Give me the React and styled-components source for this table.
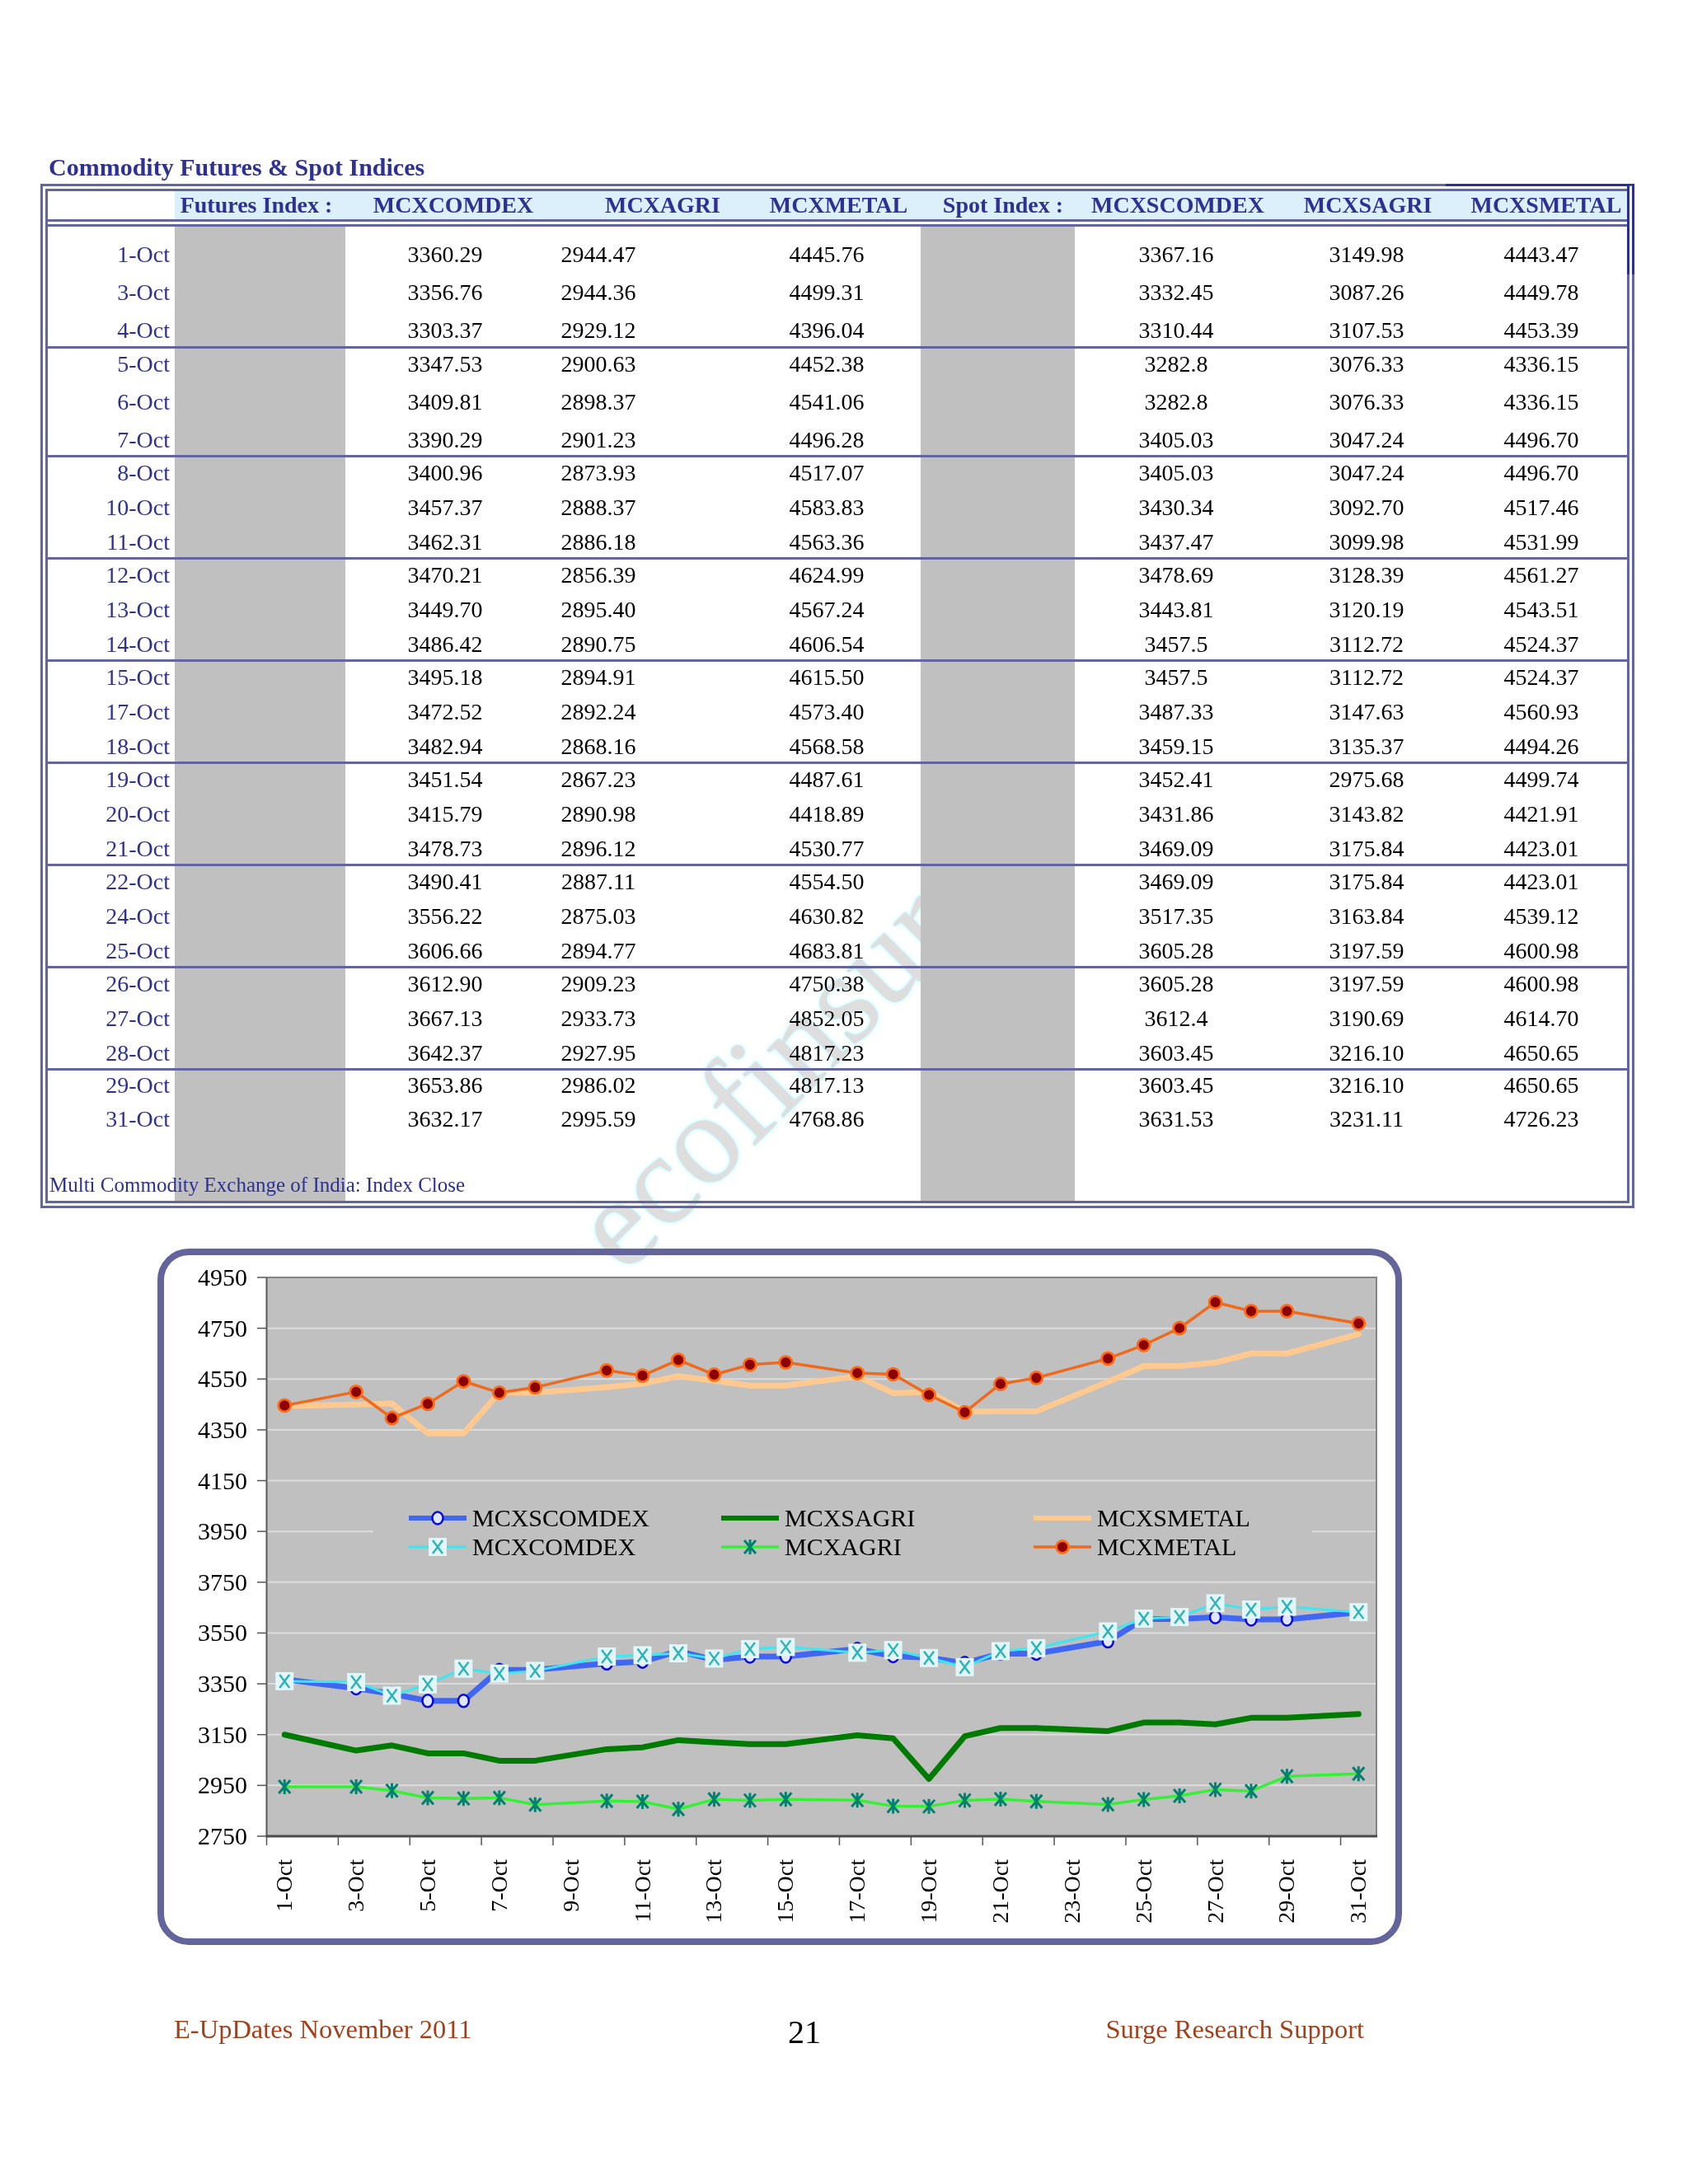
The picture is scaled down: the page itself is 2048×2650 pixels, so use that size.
import React from "react";
import styled, { createGlobalStyle } from "styled-components";

const NAVY = "#2f3192";
const RULE = "#63659f";
const GREY = "#c0c0c0";

const GlobalStyle = createGlobalStyle`
  html, body {
    margin: 0;
    padding: 0;
    background: #ffffff;
  }
  body {
    font-family: "Liberation Serif", "Times New Roman", serif;
  }
`;

const ROWS = [
  ["1-Oct", "3360.29", "2944.47", "4445.76", "3367.16", "3149.98", "4443.47"],
  ["3-Oct", "3356.76", "2944.36", "4499.31", "3332.45", "3087.26", "4449.78"],
  ["4-Oct", "3303.37", "2929.12", "4396.04", "3310.44", "3107.53", "4453.39"],
  ["5-Oct", "3347.53", "2900.63", "4452.38", "3282.8", "3076.33", "4336.15"],
  ["6-Oct", "3409.81", "2898.37", "4541.06", "3282.8", "3076.33", "4336.15"],
  ["7-Oct", "3390.29", "2901.23", "4496.28", "3405.03", "3047.24", "4496.70"],
  ["8-Oct", "3400.96", "2873.93", "4517.07", "3405.03", "3047.24", "4496.70"],
  ["10-Oct", "3457.37", "2888.37", "4583.83", "3430.34", "3092.70", "4517.46"],
  ["11-Oct", "3462.31", "2886.18", "4563.36", "3437.47", "3099.98", "4531.99"],
  ["12-Oct", "3470.21", "2856.39", "4624.99", "3478.69", "3128.39", "4561.27"],
  ["13-Oct", "3449.70", "2895.40", "4567.24", "3443.81", "3120.19", "4543.51"],
  ["14-Oct", "3486.42", "2890.75", "4606.54", "3457.5", "3112.72", "4524.37"],
  ["15-Oct", "3495.18", "2894.91", "4615.50", "3457.5", "3112.72", "4524.37"],
  ["17-Oct", "3472.52", "2892.24", "4573.40", "3487.33", "3147.63", "4560.93"],
  ["18-Oct", "3482.94", "2868.16", "4568.58", "3459.15", "3135.37", "4494.26"],
  ["19-Oct", "3451.54", "2867.23", "4487.61", "3452.41", "2975.68", "4499.74"],
  ["20-Oct", "3415.79", "2890.98", "4418.89", "3431.86", "3143.82", "4421.91"],
  ["21-Oct", "3478.73", "2896.12", "4530.77", "3469.09", "3175.84", "4423.01"],
  ["22-Oct", "3490.41", "2887.11", "4554.50", "3469.09", "3175.84", "4423.01"],
  ["24-Oct", "3556.22", "2875.03", "4630.82", "3517.35", "3163.84", "4539.12"],
  ["25-Oct", "3606.66", "2894.77", "4683.81", "3605.28", "3197.59", "4600.98"],
  ["26-Oct", "3612.90", "2909.23", "4750.38", "3605.28", "3197.59", "4600.98"],
  ["27-Oct", "3667.13", "2933.73", "4852.05", "3612.4", "3190.69", "4614.70"],
  ["28-Oct", "3642.37", "2927.95", "4817.23", "3603.45", "3216.10", "4650.65"],
  ["29-Oct", "3653.86", "2986.02", "4817.13", "3603.45", "3216.10", "4650.65"],
  ["31-Oct", "3632.17", "2995.59", "4768.86", "3631.53", "3231.11", "4726.23"],
];

// row groups between the rules of the table
const GROUPS = [
  { from: 0, to: 3, pt: 25, pb: 10, gap: 28 },
  { from: 3, to: 6, pt: 10, pb: 9, gap: 28 },
  { from: 6, to: 9, pt: 10, pb: 9, gap: 24 },
  { from: 9, to: 12, pt: 10, pb: 9, gap: 24 },
  { from: 12, to: 15, pt: 10, pb: 9, gap: 24 },
  { from: 15, to: 18, pt: 10, pb: 9, gap: 24 },
  { from: 18, to: 21, pt: 10, pb: 9, gap: 24 },
  { from: 21, to: 24, pt: 10, pb: 9, gap: 24 },
  { from: 24, to: 26, pt: 9, pb: 0, gap: 23, last: true },
];

const HEADS = [
  { label: "", blank: true },
  { label: "Futures Index :" },
  { label: "MCXCOMDEX" },
  { label: "MCXAGRI" },
  { label: "MCXMETAL" },
  { label: "Spot Index :" },
  { label: "MCXSCOMDEX" },
  { label: "MCXSAGRI" },
  { label: "MCXSMETAL" },
];

const Page = styled.div`
  position: relative;
  width: 2048px;
  height: 2650px;
  padding-top: 186px;
  box-sizing: border-box;
  overflow: hidden;
  background: #ffffff;
`;

const Title = styled.h1`
  margin: 0 0 0 59px;
  font: bold 30px/34px "Liberation Serif", "Times New Roman", serif;
  color: ${NAVY};
`;

const Frame = styled.div`
  position: relative;
  margin: 3px 0 0 49px;
  width: 1934px;
  box-sizing: border-box;
  border: 9px double ${RULE};

  &::after {
    content: "";
    position: absolute;
    top: -9px;
    right: -9px;
    width: 229px;
    height: 110px;
    box-sizing: border-box;
    border-top: 3px solid #2a3090;
    border-right: 9px double #2a3090;
    pointer-events: none;
  }
`;

const HeaderRow = styled.div`
  display: grid;
  grid-template-columns: 154px 198px 280px 228px 199px 200px 224px 237px 196px;
  height: 34px;
  border-bottom: 9px double ${RULE};
`;

const HeadCell = styled.div`
  background: ${(p) => (p.$blank ? "transparent" : "#dcf0fc")};
  font: bold 28px/34px "Liberation Serif", "Times New Roman", serif;
  color: ${NAVY};
  text-align: center;
  white-space: nowrap;
`;

const Body = styled.div`
  background: linear-gradient(
    to right,
    transparent 154px,
    ${GREY} 154px,
    ${GREY} 361px,
    transparent 361px,
    transparent 1059px,
    ${GREY} 1059px,
    ${GREY} 1246px,
    transparent 1246px
  );
`;

const Group = styled.div`
  display: flex;
  flex-direction: column;
  gap: ${(p) => p.$gap}px;
  padding: ${(p) => p.$pt}px 0 ${(p) => p.$pb}px;
  border-bottom: ${(p) => (p.$last ? "none" : `3px solid ${RULE}`)};
`;

const Row = styled.div`
  display: grid;
  grid-template-columns: 154px 207px 242px 228px 228px 187px 246px 216px 208px;
  height: 18px;
  font: 28px/18px "Liberation Serif", "Times New Roman", serif;
  white-space: nowrap;
`;

const DateCell = styled.div`
  text-align: right;
  padding-right: 6px;
  color: ${NAVY};
`;

const Shade = styled.div``;

const Value = styled.div`
  text-align: center;
  padding-right: ${(p) => p.$shift || 0}px;
  color: #000000;
`;

const Note = styled.div`
  padding: 57px 0 5px 2px;
  font: 25px/28px "Liberation Serif", "Times New Roman", serif;
  color: ${NAVY};
`;

const ChartFrame = styled.div`
  margin: 49px 0 0 191px;
  width: 1510px;
  height: 845px;
  box-sizing: border-box;
  border: 8px solid #64649c;
  border-radius: 38px;
  background: #ffffff;
  overflow: hidden;

  svg {
    display: block;
  }
`;

const Footer = styled.div`
  display: grid;
  grid-template-columns: 745px auto 1fr;
  align-items: start;
  margin-top: 82px;
  padding: 0 393px 0 211px;
`;

const FootText = styled.span`
  font: 32.5px/40px "Liberation Serif", "Times New Roman", serif;
  color: #a3401c;
  text-align: ${(p) => (p.$right ? "right" : "left")};
  white-space: nowrap;
`;

const PageNo = styled.span`
  margin-top: 4px;
  font: 40px/40px "Liberation Serif", "Times New Roman", serif;
  color: #000000;
`;

const Watermark = styled.div`
  position: absolute;
  left: 758px;
  top: 1418px;
  font: 156px/156px "Liberation Serif", "Times New Roman", serif;
  color: #dedede;
  text-shadow: 0 0 2px #b4f3ff, 0 0 4px #c6f9ff, 0 0 6px #d6fbff;
  transform: rotate(-45deg);
  transform-origin: 0 130px;
  mix-blend-mode: darken;
  pointer-events: none;
  white-space: nowrap;
`;

/* ---------- chart ---------- */

const PL = 323.5;
const PR = 1670;
const PT = 1550;
const PB = 2228;
const BIN = (PR - PL) / 31;
const xOf = (d) => PL + (d - 0.5) * BIN;
const yOf = (v) => PT + ((4950 - v) / 2200) * (PB - PT);

const DAYS = ROWS.map((r) => parseInt(r[0], 10));

const SERIES = [
  { name: "MCXSCOMDEX", col: 4, stroke: "#4167f2", width: 7, marker: "ring" },
  { name: "MCXCOMDEX", col: 1, stroke: "#3fe6f0", width: 3, marker: "box" },
  { name: "MCXSAGRI", col: 5, stroke: "#007a00", width: 7 },
  { name: "MCXAGRI", col: 2, stroke: "#35f035", width: 3.5, marker: "star" },
  { name: "MCXSMETAL", col: 6, stroke: "#ffc990", width: 7 },
  { name: "MCXMETAL", col: 3, stroke: "#ee6a1c", width: 3.5, marker: "dot" },
];

const Marker = ({ kind, x, y }) => {
  if (kind === "ring") {
    return <ellipse cx={x} cy={y} rx={6.5} ry={7.5} fill="#dfe6ff" stroke="#0a0ad0" strokeWidth={2.5} />;
  }
  if (kind === "box") {
    return (
      <g>
        <rect x={x - 11} y={y - 11} width={22} height={22} fill="#e3f5f7" />
        <path d={`M${x - 6} ${y - 8}L${x + 6} ${y + 8}M${x + 6} ${y - 8}L${x - 6} ${y + 8}`} stroke="#2ab4b8" strokeWidth={2.4} />
      </g>
    );
  }
  if (kind === "star") {
    return (
      <path
        d={`M${x - 7} ${y - 8}L${x + 7} ${y + 8}M${x + 7} ${y - 8}L${x - 7} ${y + 8}M${x} ${y - 9}L${x} ${y + 9}`}
        stroke="#00806e"
        strokeWidth={3}
      />
    );
  }
  if (kind === "dot") {
    return <circle cx={x} cy={y} r={7.5} fill="#8b0000" stroke="#ff6a10" strokeWidth={2.8} />;
  }
  return null;
};

const LEGEND = [
  { s: 0, x: 531, y: 1842 },
  { s: 2, x: 910, y: 1842 },
  { s: 4, x: 1289, y: 1842 },
  { s: 1, x: 531, y: 1877 },
  { s: 3, x: 910, y: 1877 },
  { s: 5, x: 1289, y: 1877 },
];

const TICKS_Y = [4950, 4750, 4550, 4350, 4150, 3950, 3750, 3550, 3350, 3150, 2950, 2750];
const LABEL_DAYS = Array.from({ length: 16 }, (_, i) => 1 + i * 2);

const Chart = () => (
  <svg width={1494} height={829} viewBox="199 1523 1494 829" fontFamily="Liberation Serif, Times New Roman, serif">
    <rect x={PL} y={PT} width={PR - PL} height={PB - PT} fill={GREY} />
    {TICKS_Y.slice(1, -1).map((v) => (
      <line key={v} x1={PL} x2={PR} y1={yOf(v)} y2={yOf(v)} stroke="#dcdcdc" strokeWidth={2} />
    ))}
    <path d={`M${PL} ${PT}L${PR} ${PT}L${PR} ${PB}`} fill="none" stroke="#858585" strokeWidth={2} />
    <line x1={PL} x2={PL} y1={PT} y2={PB} stroke="#5a5a5a" strokeWidth={2} />
    <line x1={PL - 1} x2={PR + 1} y1={PB} y2={PB} stroke="#4a4a4a" strokeWidth={3} />

    {TICKS_Y.map((v) => (
      <g key={v}>
        <line x1={312} x2={PL} y1={yOf(v)} y2={yOf(v)} stroke="#555" strokeWidth={1.5} />
        <text x={300} y={yOf(v) + 10} textAnchor="end" fontSize={30} fill="#000">
          {v}
        </text>
      </g>
    ))}

    {Array.from({ length: 16 }, (_, k) => (
      <line key={k} x1={PL + 2 * k * BIN} x2={PL + 2 * k * BIN} y1={PB} y2={PB + 11} stroke="#555" strokeWidth={1.5} />
    ))}
    {LABEL_DAYS.map((d) => (
      <text key={d} transform={`translate(${xOf(d) + 9} 2256) rotate(-90)`} textAnchor="end" fontSize={28} fill="#000">
        {d}-Oct
      </text>
    ))}

    {SERIES.map((s) => {
      const pts = ROWS.map((r, i) => [xOf(DAYS[i]), yOf(parseFloat(r[s.col]))]);
      return (
        <g key={s.name}>
          <polyline
            points={pts.map((p) => p.join(",")).join(" ")}
            fill="none"
            stroke={s.stroke}
            strokeWidth={s.width}
            strokeLinejoin="round"
            strokeLinecap="round"
          />
          {s.marker && pts.map((p, i) => <Marker key={i} kind={s.marker} x={p[0]} y={p[1]} />)}
        </g>
      );
    })}

    <rect x={453} y={1805} width={1139} height={107} fill={GREY} />
    {LEGEND.map(({ s, x, y }) => {
      const ser = SERIES[s];
      return (
        <g key={ser.name}>
          <line x1={x - 35} x2={x + 35} y1={y} y2={y} stroke={ser.stroke} strokeWidth={ser.width === 7 ? 6 : 3.5} />
          {ser.marker && <Marker kind={ser.marker} x={x} y={y} />}
          <text x={x + 42} y={y + 10} fontSize={30} fill="#000">
            {ser.name}
          </text>
        </g>
      );
    })}
  </svg>
);

export default function App() {
  return (
    <>
      <GlobalStyle />
      <Page>
        <Title>Commodity Futures &amp; Spot Indices</Title>
        <Frame>
          <HeaderRow>
            {HEADS.map((h, i) => (
              <HeadCell key={i} $blank={h.blank}>
                {h.label}
              </HeadCell>
            ))}
          </HeaderRow>
          <Body>
            {GROUPS.map((g) => (
              <Group key={g.from} $pt={g.pt} $pb={g.pb} $gap={g.gap} $last={g.last}>
                {ROWS.slice(g.from, g.to).map((r) => (
                  <Row key={r[0]}>
                    <DateCell>{r[0]}</DateCell>
                    <Shade />
                    <Value>{r[1]}</Value>
                    <Value $shift={98}>{r[2]}</Value>
                    <Value>{r[3]}</Value>
                    <Shade />
                    <Value>{r[4]}</Value>
                    <Value>{r[5]}</Value>
                    <Value>{r[6]}</Value>
                  </Row>
                ))}
              </Group>
            ))}
            <Note>Multi Commodity Exchange of India: Index Close</Note>
          </Body>
        </Frame>

        <ChartFrame>
          <Chart />
        </ChartFrame>

        <Footer>
          <FootText>E-UpDates November 2011</FootText>
          <PageNo>21</PageNo>
          <FootText $right>Surge Research Support</FootText>
        </Footer>

        <Watermark>ecofinsure</Watermark>
      </Page>
    </>
  );
}
